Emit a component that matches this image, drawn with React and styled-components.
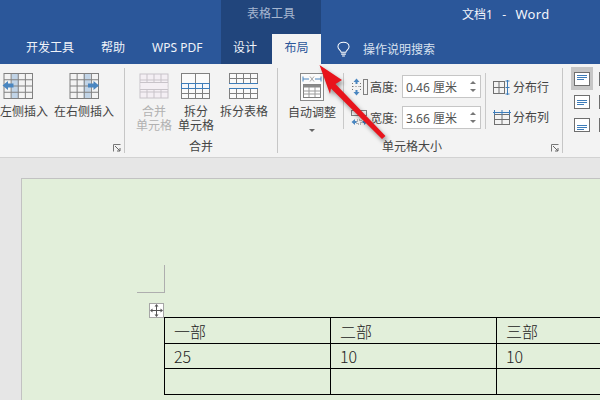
import React from 'react'
import styled, { createGlobalStyle } from 'styled-components'

const FONT = '"Noto Sans", "Noto Sans CJK SC", sans-serif'

const GlobalStyle = createGlobalStyle`
  html, body {
    margin: 0;
    padding: 0;
    background: #e6e6e6;
  }
  * {
    box-sizing: border-box;
  }
`

const Screen = styled.div`
  position: relative;
  display: flex;
  flex-direction: column;
  width: 600px;
  height: 400px;
  overflow: hidden;
  font-family: ${FONT};
  font-size: 12px;
  color: #333;
`

const TitleBar = styled.header`
  display: flex;
  flex: none;
  height: 64px;
  background: #2b579a;
  color: #fff;
`

const TitleColumn = styled.div`
  display: flex;
  flex-direction: column;
  flex: ${props => (props.$grow ? 1 : 'none')};
  width: ${props => props.$width || 'auto'};
  background: ${props => (props.$context ? '#21457c' : 'transparent')};
`

const TopLine = styled.div`
  height: 34px;
  padding-left: ${props => props.$indent || 0}px;
  line-height: 28px;
  text-align: ${props => (props.$center ? 'center' : 'left')};
  color: ${props => (props.$context ? '#a6b6d0' : '#f2f5fa')};
  white-space: pre;
`

const TitleWord = styled.span`
  font-size: 13px;
  letter-spacing: 0.3px;
`

const TabRow = styled.nav`
  display: flex;
  align-items: center;
  height: 30px;
  gap: ${props => props.$gap || 0}px;
  padding-left: ${props => props.$indent || 0}px;
`

const Tab = styled.div`
  height: 30px;
  margin-left: ${props => (props.$active ? 3 : 0)}px;
  padding: 0 ${props => (props.$pad === undefined ? 0 : props.$pad)}px;
  line-height: 28px;
  color: ${props => (props.$active ? '#2b579a' : '#f0f3f9')};
  background: ${props => (props.$active ? '#f3f3f3' : 'transparent')};
  white-space: nowrap;
`

const SearchHint = styled.div`
  display: flex;
  align-items: center;
  gap: 13px;
  padding-left: 16px;
  height: 30px;
  color: #d9e2f0;
`

const Ribbon = styled.section`
  display: flex;
  flex: none;
  height: 94px;
  padding: 4px 0 4px;
  background: #f3f3f3;
  border-bottom: 1px solid #d2d2d2;
`

const Group = styled.div`
  position: relative;
  display: flex;
  flex-direction: column;
  flex: none;
  width: ${props => props.$width}px;
  border-right: ${props => (props.$last ? 'none' : '1px solid #c6c6c6')};
`

const GroupBody = styled.div`
  display: flex;
  flex: 1;
  gap: ${props => props.$gap || 0}px;
  margin-left: ${props => props.$shift || 0}px;
  padding-top: 5px;
`

const GroupLabel = styled.div`
  height: 17px;
  padding-right: ${props => props.$offset || 0}px;
  line-height: 22px;
  text-align: center;
  color: #444;
`

const Launcher = styled.svg`
  position: absolute;
  right: 3px;
  bottom: 1px;
  width: 8px;
  height: 8px;
`

const LargeButton = styled.div`
  display: flex;
  flex-direction: column;
  align-items: center;
  flex: none;
  width: ${props => props.$width}px;
  margin-left: ${props => props.$left || 0}px;
  color: ${props => (props.$disabled ? '#b1b1b1' : '#444')};
`

const ButtonLabel = styled.div`
  margin-top: ${props => props.$top === undefined ? 6 : props.$top}px;
  line-height: 14px;
  text-align: center;
  white-space: nowrap;
`

const Caret = styled.div`
  width: 0;
  height: 0;
  margin-top: 9px;
  border-left: 3px solid transparent;
  border-right: 3px solid transparent;
  border-top: 3px solid #666;
`

const Divider = styled.div`
  flex: none;
  width: 1px;
  height: 56px;
  margin-left: ${props => props.$left || 0}px;
  background: #c9c9c9;
`

const SizeColumn = styled.div`
  display: flex;
  flex-direction: column;
  gap: 8px;
  margin-top: 2px;
  padding-left: 7px;
  width: 138px;
`

const SizeRow = styled.div`
  display: flex;
  align-items: center;
  height: 23px;
`

const SizeName = styled.span`
  width: 32px;
  margin-left: 2px;
  white-space: nowrap;
  color: #444;
`

const SizeInput = styled.div`
  display: flex;
  align-items: center;
  justify-content: space-between;
  width: 79px;
  height: 23px;
  padding: 0 4px 0 3px;
  background: #fff;
  border: 1px solid #c6c6c6;
  color: #555;
  white-space: pre;
`

const Spinner = styled.div`
  display: flex;
  flex-direction: column;
  gap: 5px;
`

const SpinArrow = styled.i`
  display: block;
  width: 0;
  height: 0;
  border-left: 3px solid transparent;
  border-right: 3px solid transparent;
  border-${props => (props.$down ? 'top' : 'bottom')}: 3px solid #777;
`

const DistributeColumn = styled.div`
  display: flex;
  flex-direction: column;
  gap: 12px;
  margin: 5px 0 0 7px;
`

const DistributeItem = styled.div`
  display: flex;
  align-items: center;
  gap: 2px;
  height: 18px;
  color: #444;
  white-space: nowrap;
`

const AlignGrid = styled.div`
  display: grid;
  grid-template-columns: repeat(2, 25px);
  grid-auto-rows: 23px;
  margin: -1px 0 0 8px;
`

const AlignCell = styled.div`
  display: flex;
  justify-content: center;
  align-items: center;
  width: 22px;
  background: ${props => (props.$selected ? '#c6c6c6' : 'transparent')};
`

const Canvas = styled.main`
  flex: 1;
  padding: 20px 0 0 21px;
  overflow: hidden;
  background: #e6e6e6;
`

const Sheet = styled.div`
  position: relative;
  width: 700px;
  height: 300px;
  padding: 86px 0 0 115px;
  background: #e2efda;
  border: 1px solid #c2c2c2;
`

const CropMark = styled.div`
  width: 28px;
  height: 28px;
  border-right: 1px solid #aeaeae;
  border-bottom: 1px solid #aeaeae;
`

const MoveHandle = styled.div`
  position: absolute;
  left: 127px;
  top: 124px;
  display: flex;
  justify-content: center;
  align-items: center;
  width: 15px;
  height: 15px;
  background: #fff;
  border: 1px solid #a6a6a6;
`

const WordTable = styled.table`
  width: 500px;
  margin: 24px 0 0 27px;
  border-collapse: collapse;
  table-layout: fixed;
  font-family: "Noto Sans CJK SC", sans-serif;
  font-weight: 300;
  font-size: 16px;
  color: #222;
`

const Cell = styled.td`
  height: ${props => props.$height}px;
  padding: 0 0 0 9px;
  border: 1px solid #000;
  line-height: 20px;
`

const ArrowLayer = styled.svg`
  position: absolute;
  left: 310px;
  top: 58px;
  width: 90px;
  height: 90px;
  overflow: visible;
  filter: drop-shadow(2px 3px 2px rgba(0, 0, 0, 0.4));
`

const GRID = '#808080'
const BLUE = '#4a86c0'
const SOFT = '#c1d4e7'

function TableLines({ x = 1, y = 1, w = 28, h = 24, cols = 4, rows = 4, color = GRID }) {
  const parts = []
  for (let i = 1; i < cols; i++) {
    const px = x + (w * i) / cols
    parts.push(<line key={`c${i}`} x1={px} y1={y} x2={px} y2={y + h} stroke={color} />)
  }
  for (let i = 1; i < rows; i++) {
    const py = y + (h * i) / rows
    parts.push(<line key={`r${i}`} x1={x} y1={py} x2={x + w} y2={py} stroke={color} />)
  }
  return (
    <g strokeWidth="1">
      <rect x={x} y={y} width={w} height={h} fill="none" stroke={color} />
      {parts}
    </g>
  )
}

function InsertIcon({ side }) {
  const left = side === 'left'
  return (
    <svg width="32" height="26" viewBox="0 0 32 26">
      <rect x={left ? 9.5 : 15.5} y="0.5" width="7" height="25" fill={SOFT} />
      <g transform="translate(1.5 -0.5)"><TableLines x={0.5} y={1} h={25} w={28.5} /></g>
      {left
        ? <path d="M0.5 12.5 L6 8 V10.5 H11.5 V14.5 H6 V17 Z" fill={BLUE} />
        : <path d="M31 12.5 L25.5 8 V10.5 H20 V14.5 H25.5 V17 Z" fill={BLUE} />}
    </svg>
  )
}

function MergeIcon() {
  return (
    <svg width="30" height="26" viewBox="0 0 30 26">
      <rect x="1" y="1" width="28" height="24" fill="#f4eff4" />
      <TableLines color="#c8c3c9" />
      <rect x="1.5" y="9.5" width="27" height="7" fill="#f4eff4" />
      <path d="M1 9.5 H29 M1 16.5 H29" stroke="#c8c3c9" />
    </svg>
  )
}

function SplitCellIcon() {
  return (
    <svg width="30" height="26" viewBox="0 0 30 26">
      <rect x="0.5" y="0.5" width="28" height="25" fill="#fafafa" stroke={GRID} />
      <path d="M14.5 1 V10 M14.5 16 V25 M7.5 16 V25 M21.5 16 V25 M1 20.5 H28" stroke={GRID} />
      <rect x="0.5" y="10.5" width="28" height="5" fill="#f4f7fb" stroke="#3d7cb9" />
      <path d="M7.5 11 V15 M14.5 11 V15 M21.5 11 V15" stroke="#3d7cb9" />
    </svg>
  )
}

function SplitTableIcon() {
  return (
    <svg width="30" height="26" viewBox="0 0 30 26">
      <g fill="#fafafa" stroke={GRID}>
        <rect x="0.5" y="0.5" width="28" height="10" />
        <rect x="0.5" y="15.5" width="28" height="10" />
        <path d="M7.5 1 V10 M14.5 1 V10 M21.5 1 V10 M1 5.5 H28 M7.5 16 V25 M14.5 16 V25 M21.5 16 V25 M1 20.5 H28" fill="none" />
      </g>
      <path d="M0 10.5 H29 M0 15.5 H29" stroke="#3d7cb9" />
    </svg>
  )
}

function AutoFitIcon() {
  return (
    <svg width="24" height="28" viewBox="0 0 24 28">
      <rect x="0.5" y="0.5" width="23" height="27" fill="#fbfbfb" stroke="#8a8a8a" />
      <path d="M3 6 H9 M15 6 H21 M3 3.5 V8.5 M21 3.5 V8.5" stroke="#4a86c0" />
      <path d="M10 3.5 L14 8.5 M14 3.5 L10 8.5" stroke="#a8a8a8" />
      <rect x="3.5" y="11.5" width="17" height="13" fill="#fff" stroke="#808080" />
      <rect x="3.5" y="11.5" width="17" height="3" fill="#8a8a8a" />
      <path d="M3.5 18 H20.5 M3.5 21 H20.5 M9 14 V24 M15 14 V24" stroke="#9a9a9a" />
    </svg>
  )
}

function HeightIcon() {
  return (
    <svg width="17" height="18" viewBox="0 0 17 18">
      <path d="M1.5 5 V13 M9.5 5 V13" stroke="#777" strokeDasharray="1 2" />
      <path d="M1.5 8.5 H9.5" stroke="#777" strokeDasharray="1 2" />
      <path d="M5.5 0.5 L8.5 4 H6.5 V6 H4.5 V4 H2.5 Z M5.5 17.5 L8.5 14 H6.5 V12 H4.5 V14 H2.5 Z" fill={BLUE} />
      <rect x="12.5" y="1.5" width="4" height="15" fill="none" stroke="#808080" />
    </svg>
  )
}

function WidthIcon() {
  return (
    <svg width="17" height="18" viewBox="0 0 17 18">
      <rect x="0.5" y="1.5" width="15" height="5" fill="none" stroke="#808080" />
      <rect x="6" y="11" width="4" height="4" fill="none" stroke="#777" strokeDasharray="1 1" />
      <path d="M0.5 13 L4 10 V12 H5.5 V14 H4 V16 Z M16.5 13 L13 10 V12 H11.5 V14 H13 V16 Z" fill={BLUE} />
    </svg>
  )
}

function DistributeRowsIcon() {
  return (
    <svg width="18" height="15" viewBox="0 0 18 15">
      <rect x="0.5" y="1.5" width="11" height="12" fill="none" stroke="#707070" />
      <path d="M0.5 7.5 H11.5 M6 1.5 V13.5" stroke="#707070" />
      <path d="M14.5 0 V15 M12.5 1 H16.5 M12.5 7.5 H16.5 M12.5 14 H16.5" stroke="#3d7cb9" />
    </svg>
  )
}

function DistributeColsIcon() {
  return (
    <svg width="18" height="15" viewBox="0 0 18 15">
      <rect x="1.5" y="4.5" width="15" height="10" fill="none" stroke="#707070" />
      <path d="M1.5 9.5 H16.5 M9 4.5 V14.5" stroke="#707070" />
      <path d="M0 2.5 H18 M1.5 0 V5 M9 0 V5 M16.5 0 V5" stroke="#3d7cb9" />
    </svg>
  )
}

function AlignIcon({ row, col }) {
  const top = [3, 5, 7][row] + 0.5
  const x1 = col === 0 ? 3 : 6
  const end = col === 0 ? 10 : 13
  return (
    <svg width="16" height="14" viewBox="0 0 16 14">
      <rect x="0.5" y="0.5" width="15" height="13" fill="#fff" stroke="#6e6e6e" />
      <path d={`M${x1} ${top} H13 M${x1} ${top + 2} H13 M${x1} ${top + 4} H${end}`} stroke="#3d7cb9" />
    </svg>
  )
}

function LauncherIcon() {
  return (
    <Launcher viewBox="0 0 8 8">
      <path d="M0.5 7.5 V0.5 H7.5" fill="none" stroke="#777" />
      <path d="M2 2 L7 7 M7 4 V7 H4" fill="none" stroke="#666" />
    </Launcher>
  )
}

function BulbIcon() {
  return (
    <svg width="13" height="17" viewBox="0 0 14 17">
      <path d="M4.5 11.5 C4.5 9.5 1 8.5 1 5.5 C1 2.5 3.8 0.7 7 0.7 C10.2 0.7 13 2.5 13 5.5 C13 8.5 9.5 9.5 9.5 11.5 Z" fill="none" stroke="#fff" strokeWidth="1.1" />
      <path d="M4.5 13.5 H9.5 M5.5 15.5 H8.5" stroke="#fff" strokeWidth="1.2" />
    </svg>
  )
}

const ALIGN_ROWS = [0, 1, 2]

function App() {
  return (
    <Screen>
      <GlobalStyle />
      <TitleBar>
        <TitleColumn $width="221px">
          <TopLine />
          <TabRow $indent={26} $gap={27}>
            <Tab>开发工具</Tab>
            <Tab>帮助</Tab>
            <Tab>WPS PDF</Tab>
          </TabRow>
        </TitleColumn>
        <TitleColumn $width="100px" $context>
          <TopLine $context $center>表格工具</TopLine>
          <TabRow>
            <Tab $pad={12}>设计</Tab>
            <Tab $pad={12.5} $active>布局</Tab>
          </TabRow>
        </TitleColumn>
        <TitleColumn $grow>
          <TopLine $indent={141}>文档1   -   <TitleWord>Word</TitleWord></TopLine>
          <SearchHint>
            <BulbIcon />
            操作说明搜索
          </SearchHint>
        </TitleColumn>
      </TitleBar>

      <Ribbon>
        <Group $width={125}>
          <GroupBody $shift={-12} $gap={6}>
            <LargeButton $width={60}>
              <InsertIcon side="left" />
              <ButtonLabel>在左侧插入</ButtonLabel>
            </LargeButton>
            <LargeButton $width={60}>
              <InsertIcon side="right" />
              <ButtonLabel>在右侧插入</ButtonLabel>
            </LargeButton>
          </GroupBody>
          <GroupLabel />
          <LauncherIcon />
        </Group>

        <Group $width={153}>
          <GroupBody $shift={11} $gap={6}>
            <LargeButton $width={36} $disabled>
              <MergeIcon />
              <ButtonLabel>合并<br />单元格</ButtonLabel>
            </LargeButton>
            <LargeButton $width={36}>
              <SplitCellIcon />
              <ButtonLabel>拆分<br />单元格</ButtonLabel>
            </LargeButton>
            <LargeButton $width={48}>
              <SplitTableIcon />
              <ButtonLabel>拆分表格</ButtonLabel>
            </LargeButton>
          </GroupBody>
          <GroupLabel>合并</GroupLabel>
        </Group>

        <Group $width={285}>
          <GroupBody $shift={10}>
            <LargeButton $width={48}>
              <AutoFitIcon />
              <ButtonLabel $top={5}>自动调整</ButtonLabel>
              <Caret />
            </LargeButton>
            <Divider $left={7} />
            <SizeColumn>
              <SizeRow>
                <HeightIcon />
                <SizeName>高度:</SizeName>
                <SizeInput>
                  0.46 厘米
                  <Spinner><SpinArrow /><SpinArrow $down /></Spinner>
                </SizeInput>
              </SizeRow>
              <SizeRow>
                <WidthIcon />
                <SizeName>宽度:</SizeName>
                <SizeInput>
                  3.66 厘米
                  <Spinner><SpinArrow /><SpinArrow $down /></Spinner>
                </SizeInput>
              </SizeRow>
            </SizeColumn>
            <Divider $left={3} />
            <DistributeColumn>
              <DistributeItem><DistributeRowsIcon />分布行</DistributeItem>
              <DistributeItem><DistributeColsIcon />分布列</DistributeItem>
            </DistributeColumn>
          </GroupBody>
          <GroupLabel $offset={16}>单元格大小</GroupLabel>
          <LauncherIcon />
        </Group>

        <Group $width={37} $last>
          <AlignGrid>
            {ALIGN_ROWS.map(row => (
              <React.Fragment key={row}>
                <AlignCell $selected={row === 0}><AlignIcon row={row} col={0} /></AlignCell>
                <AlignCell><AlignIcon row={row} col={1} /></AlignCell>
              </React.Fragment>
            ))}
          </AlignGrid>
        </Group>
      </Ribbon>

      <Canvas>
        <Sheet>
          <CropMark />
          <MoveHandle>
            <svg width="13" height="13" viewBox="0 0 13 13">
              <path d="M6.5 1 V12 M1 6.5 H12" stroke="#555" />
              <path d="M6.5 0 L8.5 2.5 H4.5 Z M6.5 13 L8.5 10.5 H4.5 Z M0 6.5 L2.5 4.5 V8.5 Z M13 6.5 L10.5 4.5 V8.5 Z" fill="#555" />
            </svg>
          </MoveHandle>
          <WordTable>
            <colgroup>
              <col width="166" />
              <col width="166" />
              <col width="168" />
            </colgroup>
            <tbody>
              <tr>
                <Cell $height={26}>一部</Cell>
                <Cell $height={26}>二部</Cell>
                <Cell $height={26}>三部</Cell>
              </tr>
              <tr>
                <Cell $height={25}>25</Cell>
                <Cell $height={25}>10</Cell>
                <Cell $height={25}>10</Cell>
              </tr>
              <tr>
                <Cell $height={26} />
                <Cell $height={26} />
                <Cell $height={26} />
              </tr>
            </tbody>
          </WordTable>
        </Sheet>
      </Canvas>

      <ArrowLayer viewBox="0 0 90 90">
        <path d="M9.5 7 L32 22 L25.5 26 L75.5 78 L72 81 L21 30.5 L20 36 Z" fill="#e8141c" />
      </ArrowLayer>
    </Screen>
  )
}

export default App
